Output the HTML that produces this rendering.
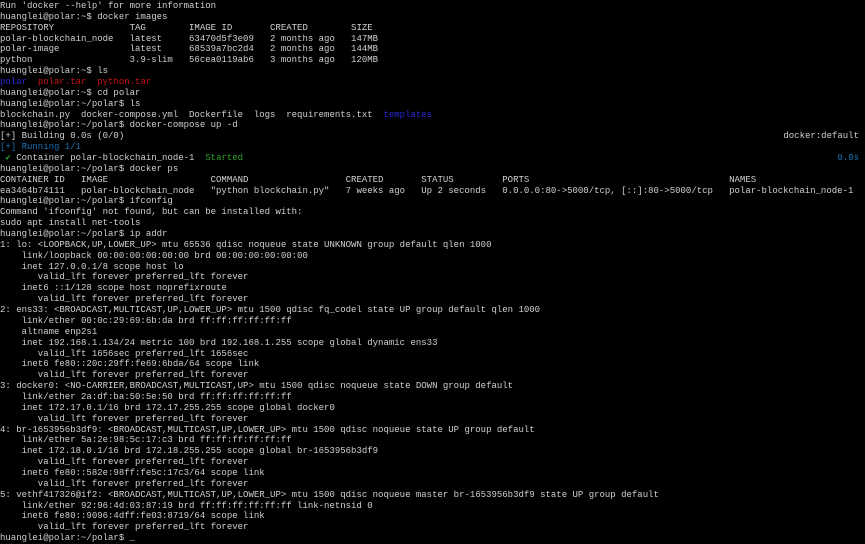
<!DOCTYPE html>
<html><head><meta charset="utf-8"><style>
html,body{margin:0;padding:0;background:#000;}
body{width:865px;height:541px;overflow:hidden;}
pre{margin:0;padding:1px 0 0 0;font-family:"Liberation Mono","DejaVu Sans Mono",monospace;font-size:9px;line-height:10.86px;color:#d0d0d0;white-space:pre;position:relative;}
.b{color:#2a2ad8}.r{color:#c81414}.c{color:#1c72b4}.g{color:#2ea02e}
.rt{position:absolute;right:6px;}
</style></head><body><pre>Run 'docker --help' for more information
huanglei@polar:~$ docker images
REPOSITORY              TAG        IMAGE ID       CREATED        SIZE
polar-blockchain_node   latest     63470d5f3e09   2 months ago   147MB
polar-image             latest     68539a7bc2d4   2 months ago   144MB
python                  3.9-slim   56cea0119ab6   3 months ago   120MB
huanglei@polar:~$ ls
<span class="b">polar</span>  <span class="r">polar.tar</span>  <span class="r">python.tar</span>
huanglei@polar:~$ cd polar
huanglei@polar:~/polar$ ls
blockchain.py  docker-compose.yml  Dockerfile  logs  requirements.txt  <span class="b">templates</span>
huanglei@polar:~/polar$ docker-compose up -d
[+] Building 0.0s (0/0)<span class="rt">docker:default</span>
<span class="c">[+] Running 1/1</span>
 <span class="g">✔</span> Container polar-blockchain_node-1  <span class="g">Started</span><span class="rt c">0.0s</span>
huanglei@polar:~/polar$ docker ps
CONTAINER ID   IMAGE                   COMMAND                  CREATED       STATUS         PORTS                                     NAMES
ea3464b74111   polar-blockchain_node   "python blockchain.py"   7 weeks ago   Up 2 seconds   0.0.0.0:80-&gt;5000/tcp, [::]:80-&gt;5000/tcp   polar-blockchain_node-1
huanglei@polar:~/polar$ ifconfig
Command 'ifconfig' not found, but can be installed with:
sudo apt install net-tools
huanglei@polar:~/polar$ ip addr
1: lo: &lt;LOOPBACK,UP,LOWER_UP&gt; mtu 65536 qdisc noqueue state UNKNOWN group default qlen 1000
    link/loopback 00:00:00:00:00:00 brd 00:00:00:00:00:00
    inet 127.0.0.1/8 scope host lo
       valid_lft forever preferred_lft forever
    inet6 ::1/128 scope host noprefixroute
       valid_lft forever preferred_lft forever
2: ens33: &lt;BROADCAST,MULTICAST,UP,LOWER_UP&gt; mtu 1500 qdisc fq_codel state UP group default qlen 1000
    link/ether 00:0c:29:69:6b:da brd ff:ff:ff:ff:ff:ff
    altname enp2s1
    inet 192.168.1.134/24 metric 100 brd 192.168.1.255 scope global dynamic ens33
       valid_lft 1656sec preferred_lft 1656sec
    inet6 fe80::20c:29ff:fe69:6bda/64 scope link
       valid_lft forever preferred_lft forever
3: docker0: &lt;NO-CARRIER,BROADCAST,MULTICAST,UP&gt; mtu 1500 qdisc noqueue state DOWN group default
    link/ether 2a:df:ba:50:5e:50 brd ff:ff:ff:ff:ff:ff
    inet 172.17.0.1/16 brd 172.17.255.255 scope global docker0
       valid_lft forever preferred_lft forever
4: br-1653956b3df9: &lt;BROADCAST,MULTICAST,UP,LOWER_UP&gt; mtu 1500 qdisc noqueue state UP group default
    link/ether 5a:2e:98:5c:17:c3 brd ff:ff:ff:ff:ff:ff
    inet 172.18.0.1/16 brd 172.18.255.255 scope global br-1653956b3df9
       valid_lft forever preferred_lft forever
    inet6 fe80::582e:98ff:fe5c:17c3/64 scope link
       valid_lft forever preferred_lft forever
5: vethf417326@if2: &lt;BROADCAST,MULTICAST,UP,LOWER_UP&gt; mtu 1500 qdisc noqueue master br-1653956b3df9 state UP group default
    link/ether 92:96:4d:03:87:19 brd ff:ff:ff:ff:ff:ff link-netnsid 0
    inet6 fe80::9096:4dff:fe03:8719/64 scope link
       valid_lft forever preferred_lft forever
huanglei@polar:~/polar$ _</pre></body></html>
